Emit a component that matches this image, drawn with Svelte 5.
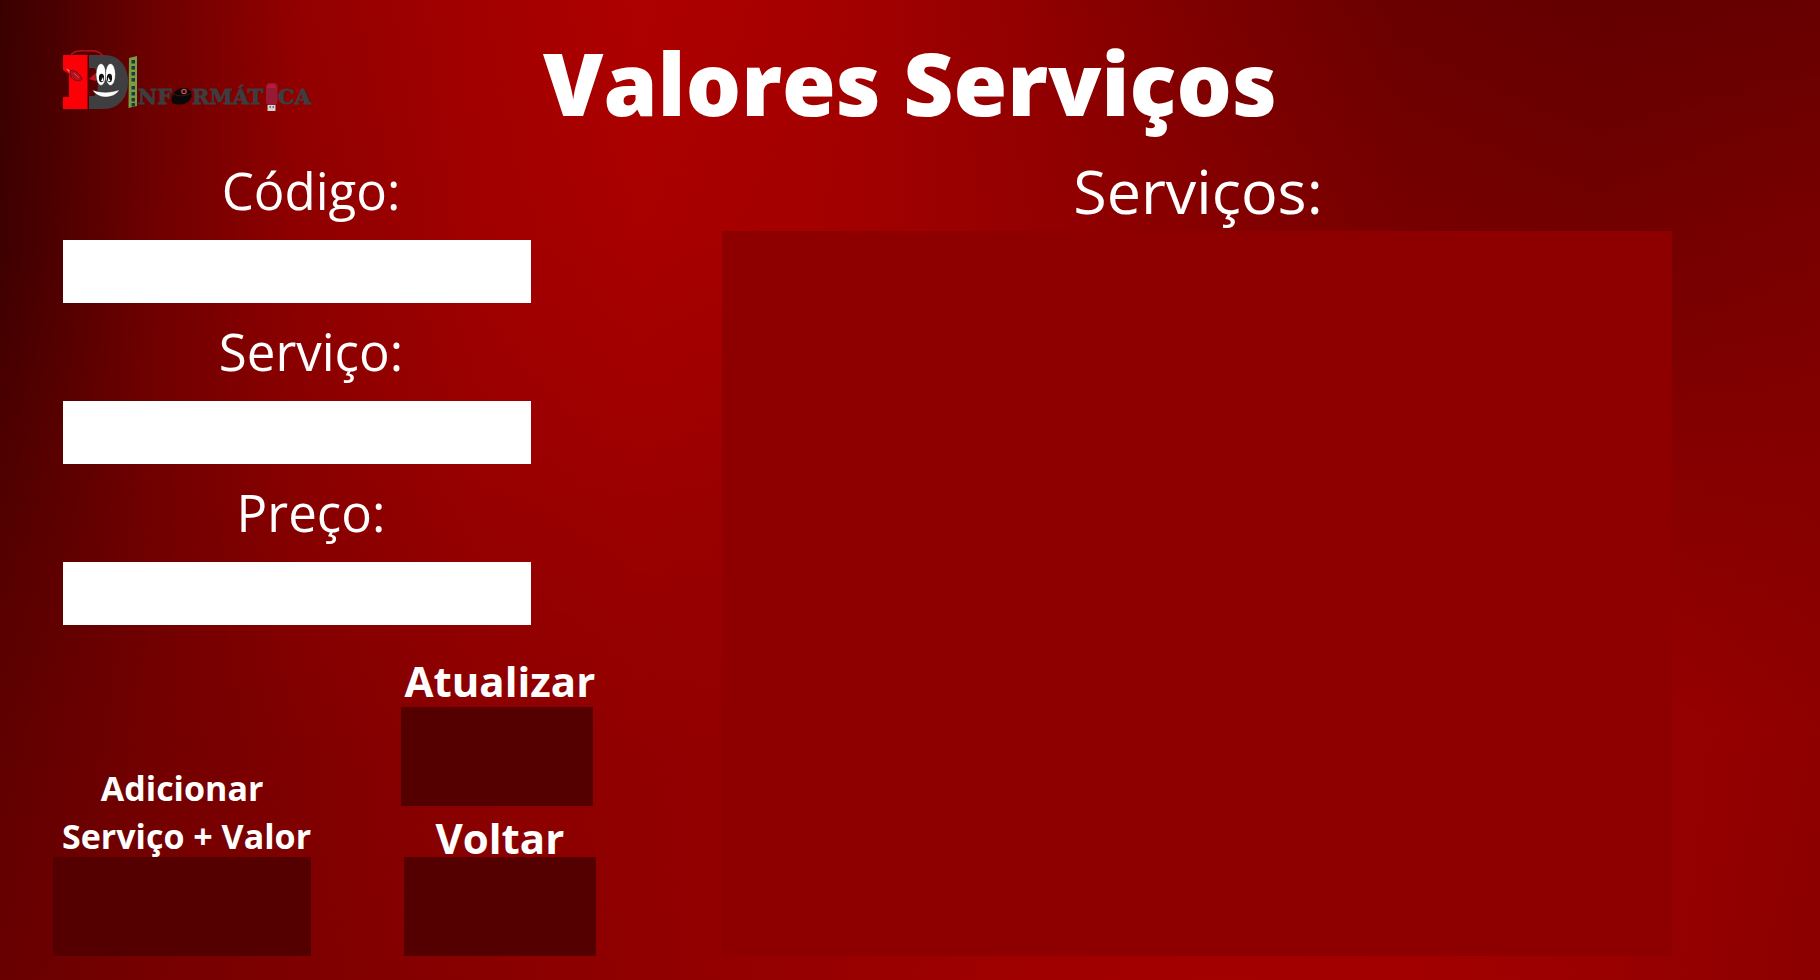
<script lang="ts">
  // Red channel of the backdrop, sampled on a coarse grid and blended both ways.
  const stops = [0, 60, 150, 300, 480, 640, 820, 1000, 1200, 1400, 1600, 1820];
  const rows = [
    [0x3a, 0x4c, 0x6c, 0x94, 0xa3, 0xae, 0xa6, 0x95, 0x7e, 0x6a, 0x64, 0x67],
    [0x3e, 0x4f, 0x6e, 0x8e, 0xa0, 0xa8, 0xa3, 0x97, 0x87, 0x78, 0x73, 0x7a],
    [0x50, 0x5c, 0x70, 0x88, 0x98, 0x9c, 0x98, 0x92, 0x8c, 0x8a, 0x88, 0x86],
    [0x60, 0x67, 0x72, 0x80, 0x8c, 0x92, 0x94, 0x96, 0x98, 0x9b, 0x9b, 0x8f],
    [0x68, 0x6e, 0x76, 0x7e, 0x88, 0x90, 0x97, 0x9f, 0xa3, 0xa2, 0x9a, 0x8b],
  ];
  const bands = rows.map((row, i) => {
    const colours = row.map((r, k) => `rgb(${r} 0 0) ${((stops[k] / 1820) * 100).toFixed(2)}%`);
    const mask = i === 0 ? 'none' : `linear-gradient(to bottom, transparent ${(i - 1) * 25}%, #000 ${i * 25}%)`;
    return `background:linear-gradient(to right, ${colours.join(', ')});mask-image:${mask}`;
  });

  const fields = [
    { id: 'codigo', label: 'Código:' },
    { id: 'servico', label: 'Serviço:' },
    { id: 'preco', label: 'Preço:' },
  ];
  let values = $state({ codigo: '', servico: '', preco: '' });

  const chips = [60, 66, 72, 78, 86, 92, 98, 103];
</script>

<div class="page">
  <div class="backdrop" aria-hidden="true">
    {#each bands as band}
      <div class="band" style={band}></div>
    {/each}
  </div>

  <header>
    <svg class="logo" viewBox="62 48 252 68" width="252" height="68" role="img" aria-label="ID Informática">
      <path d="M63 55H87.5V109H63V97H69V74L63 70Z" fill="#fb0006" />
      <path d="M89 55H104C120 55 128 67 128 82S119 109 104 109H89V96H94C97 94 98 90 98 82S97 70 94 68H89Z" fill="#3f3f41" />
      <path d="M70 56C75 49 82 51 87 51S98 49 103 56" fill="none" stroke="#b3101c" stroke-width="1.5" />
      <path d="M67 69L71 73" stroke="#d98080" stroke-width="1.5" />
      <path d="M70 71C74 69 80 74 82 79C80 82 74 81 71 77Z" fill="#b3141e" stroke="#7d0a12" />
      <path d="M74 73L79 78" stroke="#e04a50" />
      <path d="M89 79L98 71L96 81Z" fill="#c01822" />
      <ellipse cx="101" cy="74.5" rx="5" ry="11" fill="#fff" stroke="#222" stroke-width=".5" />
      <ellipse cx="110.5" cy="74.5" rx="5" ry="11" fill="#fff" stroke="#222" stroke-width=".5" />
      <ellipse cx="101.5" cy="78" rx="2.6" ry="4.2" fill="#111" />
      <ellipse cx="109.5" cy="78" rx="2.6" ry="4.2" fill="#111" />
      <path d="M101 81L103 77L103.500 81.500Z" fill="#fff" />
      <path d="M110.500 81L108 77L108 81.500Z" fill="#fff" />
      <path d="M92.5 90C101 93 111 93 119.5 89.5C115 99 98 100 92.5 90Z" fill="#fff" stroke="#222" stroke-width=".5" />
      <path d="M129 58L137 56V106L128.5 108Z" fill="#7b9c40" />
      {#each chips as y}
        <rect x="131.5" {y} width="3.5" height="3.5" fill="#173b40" />
      {/each}
      <g class="wordmark">
        <text x="138" y="103.5">NF</text>
        <text x="192" y="103.5">RMÁT</text>
        <text x="278" y="103.5">CA</text>
      </g>
      <path d="M171.500 101C172 92 177 88 184 88C191 89 193 93 191 98C188 105 178 106 172.500 103Z" fill="#080808" />
      <path d="M173 94C180 97 186 96 192 93" fill="none" stroke="#4a1010" />
      <path d="M184 88C181 84 187 84 184 81" fill="none" stroke="#5a0d10" stroke-width="1.2" />
      <circle cx="184" cy="91.5" r="2.2" fill="none" stroke="#d0525a" stroke-width="1.2" />
      <rect x="266" y="83" width="11.5" height="22" rx="4" fill="#971a34" />
      <path d="M268 84.5H275L276 88H267Z" fill="#c01838" />
      <rect x="267.5" y="105" width="8" height="6" fill="#d6d0ce" />
      <path d="M269.5 107H271M272.5 107H274" stroke="#555" stroke-width="1.5" />
    </svg>
    <h1>Valores Serviços</h1>
  </header>

  <main>
    <form onsubmit={(e) => e.preventDefault()}>
      <div class="fields">
        {#each fields as f}
          <div class="field">
            <label for={f.id}>{f.label}</label>
            <input id={f.id} type="text" autocomplete="off" bind:value={values[f.id]} />
          </div>
        {/each}
      </div>

      <div class="actions">
        <div class="add">
          <label for="adicionar">Adicionar&nbsp;<br />Serviço + Valor</label>
          <button id="adicionar" type="submit"></button>
        </div>
        <div class="side">
          <label for="atualizar">Atualizar</label>
          <button id="atualizar" class="update" type="button"></button>
          <label for="voltar">Voltar</label>
          <button id="voltar" class="back" type="button"></button>
        </div>
      </div>
    </form>

    <section aria-labelledby="lista">
      <h2 id="lista">Serviços:</h2>
      <div class="panel"></div>
    </section>
  </main>
</div>

<style>
  :global(body) {
    margin: 0;
    background: #8c0000;
  }

  .page {
    position: relative;
    isolation: isolate;
    box-sizing: border-box;
    min-height: 100vh;
    display: flex;
    flex-direction: column;
    padding: 22px 0 24px;
    color: #fff;
    font-family: 'Open Sans', 'Noto Sans', sans-serif;
  }

  .backdrop,
  .band {
    position: absolute;
    inset: 0;
  }

  .backdrop {
    z-index: -1;
  }

  header {
    display: grid;
    grid-template-columns: 1fr auto 1fr;
    align-items: center;
    padding: 0 62px;
    margin-bottom: 13px;
  }

  .logo {
    display: block;
  }

  .wordmark {
    fill: #3d3d3f;
    stroke: #3d3d3f;
    stroke-width: 0.8px;
    font: bold 21px 'DejaVu Serif', serif;
  }

  h1,
  h2 {
    margin: 0;
    text-align: center;
  }

  h1 {
    font-size: 87px;
    font-weight: 800;
    line-height: 120px;
  }

  main {
    flex: 1;
    display: grid;
    grid-template-columns: 4fr 7fr;
    column-gap: 126px;
    padding: 0 148px 0 53px;
  }

  form {
    display: flex;
    flex-direction: column;
    justify-content: space-between;
  }

  .fields {
    display: flex;
    flex-direction: column;
    gap: 13px;
    padding: 0 65px 0 10px;
  }

  .field {
    display: flex;
    flex-direction: column;
    gap: 15px;
  }

  .field label {
    padding-left: 28px;
    font-size: 51px;
    line-height: 70px;
    text-align: center;
  }

  input {
    box-sizing: border-box;
    width: 100%;
    height: 63px;
    padding: 0 16px;
    border: 0;
    border-radius: 0;
    background: #fff;
    color: #222;
    font: 32px 'Open Sans', sans-serif;
  }

  .actions {
    display: flex;
    justify-content: space-between;
    align-items: flex-end;
  }

  .actions label {
    font-weight: 700;
    text-align: center;
  }

  button {
    position: relative;
    height: 99px;
    padding: 0;
    border: 0;
    border-radius: 0;
    background: #540000;
    cursor: pointer;
  }

  .add,
  .side {
    display: flex;
    flex-direction: column;
  }

  .add {
    width: 258px;
  }

  .add label {
    padding-left: 9px;
    margin-bottom: -3px;
    font-size: 34px;
    line-height: 48px;
    white-space: nowrap;
  }

  .side {
    width: 195px;
  }

  .side label {
    padding-left: 3px;
    font-size: 42px;
    line-height: 38px;
  }

  .side button {
    width: 192px;
  }

  .update {
    margin: 7px 0 13px;
  }

  .back {
    align-self: flex-end;
  }

  section {
    display: flex;
    flex-direction: column;
    gap: 4px;
  }

  h2 {
    padding-left: 2px;
    font-size: 61px;
    font-weight: 400;
    line-height: 72px;
  }

  .panel {
    flex: 1;
    background: #8e0000;
  }
</style>
